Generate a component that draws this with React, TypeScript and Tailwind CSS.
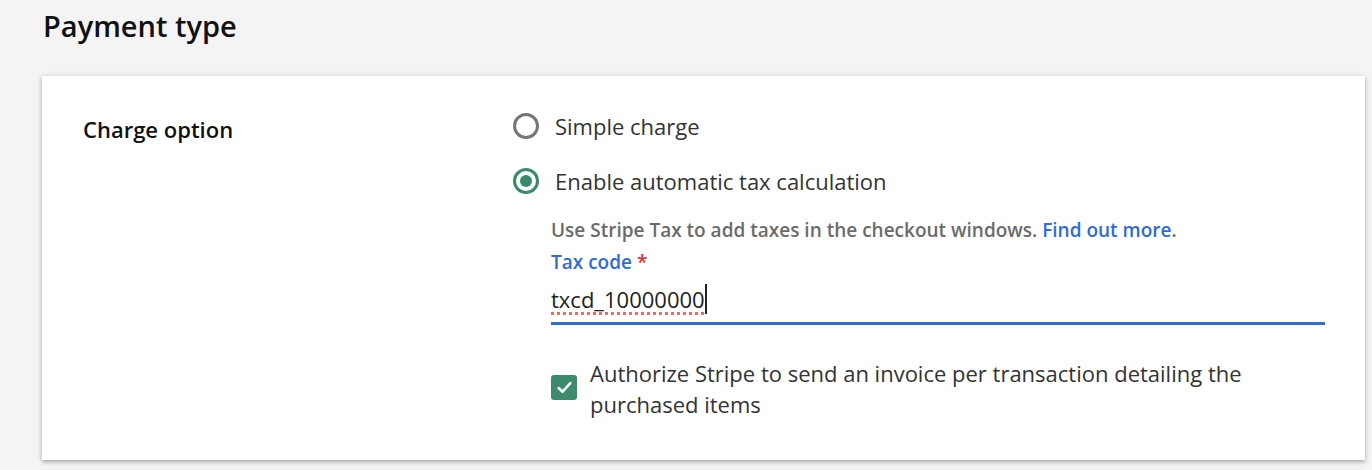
import React from 'react';

const font = { fontFamily: '"Open Sans", "Noto Sans", sans-serif' };

function Radio({ checked }: { checked?: boolean }) {
  return checked ? (
    <span className="w-[26px] h-[26px] rounded-full border-[3px] border-[#3a8a6a] flex items-center justify-center shrink-0">
      <span className="w-[12px] h-[12px] rounded-full bg-[#3a8a6a]" />
    </span>
  ) : (
    <span className="w-[26px] h-[26px] rounded-full border-[3px] border-[#767676] shrink-0" />
  );
}

export default function App() {
  return (
    <div className="w-[1372px] h-[470px] bg-[#f4f4f4] overflow-hidden" style={font}>
      <h1 className="pl-[43px] pt-[6px] text-[29px] leading-[40px] font-semibold text-[#111]">Payment type</h1>
      <div className="ml-[42px] mt-[30px] w-[1323px] h-[384px] bg-white shadow-[0_2px_4px_rgba(0,0,0,0.3),0_0_8px_rgba(0,0,0,0.06)] flex">
        <div className="w-[471px] pl-[41px] pt-[38px]">
          <p className="text-[22px] leading-[30px] font-semibold text-[#111]">Charge option</p>
        </div>
        <div className="flex-1 pt-[35px] pr-[40px]">
          <label className="flex items-center gap-[16px] h-[30px]">
            <Radio />
            <span className="text-[22px] leading-[30px] text-[#333]">Simple charge</span>
          </label>
          <label className="flex items-center gap-[16px] h-[30px] mt-[25px]">
            <Radio checked />
            <span className="text-[22px] leading-[30px] text-[#333]">Enable automatic tax calculation</span>
          </label>
          <div className="pl-[38px] mt-[21px]">
            <p className="text-[19px] leading-[26px] font-semibold text-[#6b6b6b]">
              Use Stripe Tax to add taxes in the checkout windows.{' '}
              <a className="text-[#2f6bd5]">Find out more</a>.
            </p>
            <p className="mt-[6px] text-[19px] leading-[26px] font-semibold text-[#2f6bd5]">
              Tax code <span className="text-[#d9342b]">*</span>
            </p>
            <div className="mt-[9px] h-[41px] border-b-[3px] border-[#2f6bd5] flex items-start">
              <span className="text-[22px] leading-[30px] text-[#222] underline decoration-dotted decoration-[#ef6b5f] decoration-[3px] underline-offset-[4px]">
                txcd_10000000
              </span>
              <span className="w-[2px] h-[30px] bg-[#222]" />
            </div>
            <label className="flex items-start gap-[13px] mt-[33px]">
              <span className="w-[26px] h-[25px] mt-[17px] rounded-[3px] bg-[#3d8b6d] flex items-center justify-center shrink-0">
                <svg width="17" height="17" viewBox="0 0 16 16" fill="none">
                  <path d="M2.5 8.5 L6.2 12 L13.5 3.8" stroke="white" strokeWidth="2.4" strokeLinecap="round" strokeLinejoin="round" />
                </svg>
              </span>
              <span className="text-[22px] leading-[31px] text-[#333] w-[720px]">
                Authorize Stripe to send an invoice per transaction detailing the purchased items
              </span>
            </label>
          </div>
        </div>
      </div>
    </div>
  );
}
